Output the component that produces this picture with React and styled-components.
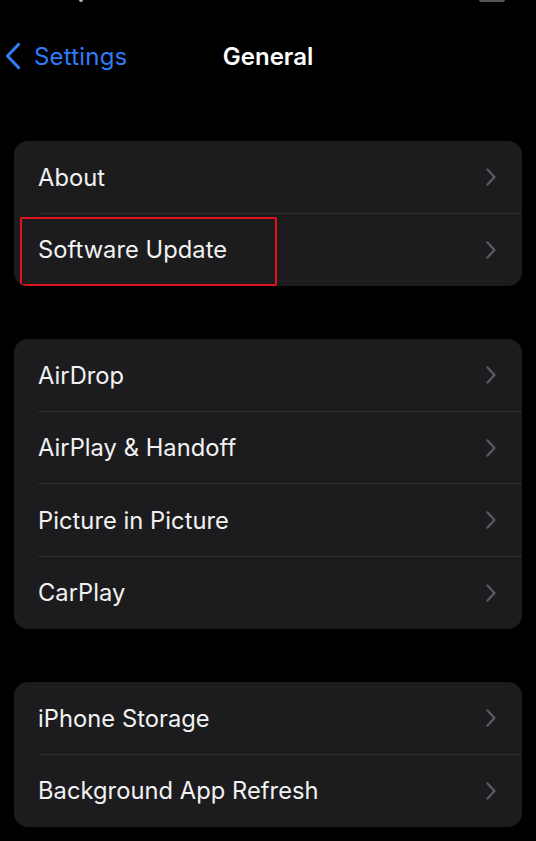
import React from "react";
import styled, { createGlobalStyle } from "styled-components";

const Global = createGlobalStyle`
  html, body {
    margin: 0;
    padding: 0;
    background: #000;
  }
  body {
    font-family: Inter, "Noto Sans", sans-serif;
    -webkit-font-smoothing: antialiased;
  }
`;

const Page = styled.div`
  width: 536px;
  height: 841px;
  background: #000;
  overflow: hidden;
  display: flex;
  flex-direction: column;
`;

const StatusStrip = styled.div`
  height: 3px;
  display: flex;
  align-items: flex-start;
  justify-content: space-between;
  padding: 0 31px 0 79px;
`;

const StatusDot = styled.div`
  width: 4px;
  height: 2px;
  background: #bbb;
  border-radius: 0 0 2px 2px;
`;

const StatusBar = styled.div`
  width: 26px;
  height: 2px;
  background: #555;
  border-radius: 0 0 2px 2px;
`;

const Nav = styled.div`
  height: 106px;
  display: grid;
  grid-template-columns: 1fr auto 1fr;
  align-items: center;
  padding: 6px 5px 0;
  margin-top: -3px;
  box-sizing: border-box;
`;

const Back = styled.div`
  display: flex;
  align-items: center;
  gap: 13px;
  color: #2f7cf6;
  font-size: 24px;
  letter-spacing: 0.2px;
`;

const Title = styled.div`
  color: #fff;
  font-size: 24px;
  font-weight: 600;
`;

const Groups = styled.div`
  display: flex;
  flex-direction: column;
  gap: 53px;
  padding: 35px 14px 0;
`;

const Group = styled.div`
  background: #1c1c1e;
  border-radius: 14px;
  overflow: hidden;
`;

const Row = styled.div`
  position: relative;
  height: 72.5px;
  display: flex;
  align-items: center;
  padding: 0 25px 0 24px;
  box-sizing: border-box;
  &:not(:last-child)::after {
    content: "";
    position: absolute;
    left: 24px;
    right: 0;
    bottom: 0;
    height: 1px;
    background: #2e2e31;
  }
`;

const Label = styled.div`
  flex: 1;
  color: #f2f2f2;
  font-size: 23.7px;
  letter-spacing: 0.05px;
`;

const Highlight = styled.div`
  position: absolute;
  left: 6px;
  top: 3px;
  width: 257px;
  height: 69.5px;
  border: 2.5px solid #e0121c;
  border-radius: 2px;
  box-sizing: border-box;
`;

const Chevron = () => (
  <svg width="12" height="20" viewBox="0 0 12 20">
    <path d="M2.5 2.5 L9.5 10 L2.5 17.5" fill="none" stroke="#5a5a5e" strokeWidth="2.4" strokeLinecap="round" strokeLinejoin="round" />
  </svg>
);

const BackChevron = () => (
  <svg width="16" height="28" viewBox="0 0 16 28">
    <path d="M13.5 2.5 L2.5 14 L13.5 25.5" fill="none" stroke="#2f7cf6" strokeWidth="3.2" strokeLinecap="round" strokeLinejoin="round" />
  </svg>
);

const groups = [
  ["About", "Software Update"],
  ["AirDrop", "AirPlay & Handoff", "Picture in Picture", "CarPlay"],
  ["iPhone Storage", "Background App Refresh"],
];

const App = () => (
  <Page>
    <Global />
    <StatusStrip>
      <StatusDot />
      <StatusBar />
    </StatusStrip>
    <Nav>
      <Back>
        <BackChevron />
        <span>Settings</span>
      </Back>
      <Title>General</Title>
      <div />
    </Nav>
    <Groups>
      {groups.map((items, gi) => (
        <Group key={gi}>
          {items.map((item) => (
            <Row key={item}>
              <Label>{item}</Label>
              <Chevron />
              {item === "Software Update" && <Highlight />}
            </Row>
          ))}
        </Group>
      ))}
    </Groups>
  </Page>
);

export default App;
